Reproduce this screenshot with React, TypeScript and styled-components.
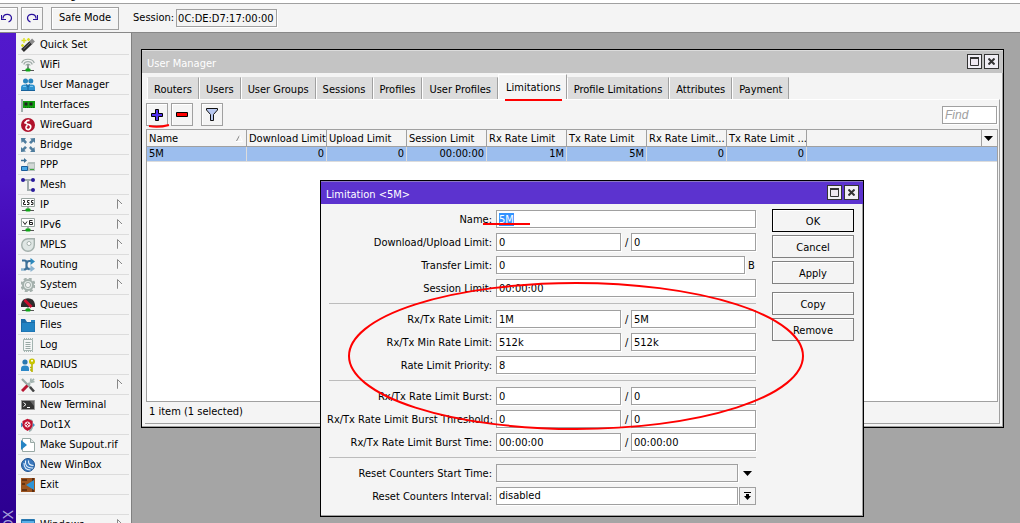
import React, { useEffect, useRef } from "react";
import styled, { createGlobalStyle, css } from "styled-components";

const line = "#a0a0a0";
const face = "#f4f4f4";
const font = '"DejaVu Sans Condensed", Tahoma, "DejaVu Sans", sans-serif';

const GlobalStyle = createGlobalStyle`
  * { box-sizing: border-box; }
  body { margin: 0; background: #a5a5a5; }
  body, button, input, select { font-family: ${font}; font-size: 11px; line-height: 14px; color: #000; }
  button, input, select { margin: 0; padding: 0; border-radius: 0; outline: none; }
  table { border-collapse: separate; border-spacing: 0; }
`;

const Page = styled.div`
  position: relative;
  display: flex;
  flex-direction: column;
  height: 100vh;
  overflow: hidden;
`;

const MenuBar = styled.nav`
  display: flex;
  align-items: flex-end;
  height: 4px;
  padding-left: 41px;
  overflow: hidden;
  background: #fff;
  border-bottom: 1px solid ${line};
`;

const MenuLink = styled.a`
  color: #000;
  text-decoration: none;
`;

const Toolbar = styled.div`
  display: flex;
  flex: none;
  align-items: center;
  height: 29px;
  background: ${face};
  border-bottom: 1px solid #888;
`;

const ToolButton = styled.button<{ $wide?: boolean }>`
  display: flex;
  align-items: center;
  justify-content: center;
  width: ${(p) => (p.$wide ? 68 : 22)}px;
  height: 23px;
  background: ${face};
  border: 1px solid ${line};
  box-shadow: inset 1px 1px #fff;
`;

const HistoryGroup = styled.div`
  display: flex;
  gap: 3px;
  margin: 0 8px 0 -4px;
`;

const SessionLabel = styled.label`
  display: flex;
  align-items: center;
  gap: 2px;
  margin-left: 14px;
`;

const textBox = css`
  height: 18px;
  min-width: 0;
  padding: 0 2px;
  background: #fff;
  border: 1px solid ${line};
  box-shadow: 1px 1px #fff;
`;

const SessionInput = styled.input`
  ${textBox}
  width: 101px;
  padding: 0 1px;
  background: ${face};
`;

const Main = styled.div`
  display: flex;
  flex: 1;
  min-height: 0;
`;

const Brand = styled.div`
  position: relative;
  flex: none;
  width: 16px;
  overflow: hidden;
  background: linear-gradient(#5218cc, #4c14c4 30%, #3c00ac 55%, #2c0090);
`;

const BrandText = styled.span`
  position: absolute;
  top: calc(100% - 13px);
  left: 0;
  line-height: 16px;
  font-family: "Liberation Sans", sans-serif;
  font-size: 14px;
  writing-mode: vertical-rl;
  rotate: 180deg;
  white-space: nowrap;
  color: #a8a4dc;
`;

const Sidebar = styled.nav`
  flex: none;
  width: 116px;
  padding: 2px 2px 0;
  overflow: hidden;
  background: ${face};
  border-right: 1px solid #808080;
`;

const SideItem = styled.button`
  display: flex;
  align-items: center;
  gap: 5px;
  width: 100%;
  height: 20px;
  padding: 0 6px 0 3px;
  background: none;
  border: 0;
  border-bottom: 1px solid #dcdcdc;
  text-align: left;
  white-space: nowrap;
  svg { flex: none; }
`;

const SideGap = styled.div`
  height: 20px;
  border-bottom: 1px solid #dcdcdc;
`;

const SideText = styled.span`
  flex: 1;
`;

const Desktop = styled.main`
  position: relative;
  flex: 1;
  overflow: hidden;
  background: #a5a5a5;
`;

const Window = styled.section`
  position: absolute;
  display: flex;
  flex-direction: column;
  background: ${face};
  border: 1px solid #000;
  box-shadow: inset -1px -1px ${line};
`;

const ManagerWindow = styled(Window)`
  left: 9px;
  right: 16px;
  top: 16px;
  height: 379px;
`;

const LimitWindow = styled(Window)`
  left: 188px;
  top: 147px;
  width: 544px;
`;

const TitleBar = styled.header<{ $active?: boolean }>`
  display: flex;
  align-items: center;
  gap: 2px;
  height: 23px;
  padding: 0 4px 1px 5px;
  color: #fff;
  background: ${(p) => (p.$active ? "#5c33cf" : "#c4c4c4")};
  border-top: 1px solid ${(p) => (p.$active ? "#8b78c4" : "#dcdcdc")};
`;

const Title = styled.h1`
  flex: 1;
  margin: 0;
  padding-top: 4px;
  font-size: 11px;
  font-weight: normal;
`;

const TitleButton = styled.button`
  display: flex;
  align-items: center;
  justify-content: center;
  width: 15px;
  height: 15px;
  background: #f0eef4;
  border: 1px solid #333;
`;

const ManagerBody = styled.div`
  display: flex;
  flex: 1;
  flex-direction: column;
  min-height: 0;
  padding: 1px 3px 3px;
`;

const Tabs = styled.div`
  display: flex;
  align-items: flex-end;
  height: 25px;
  padding-left: 2px;
`;

const Tab = styled.button<{ $active?: boolean }>`
  height: ${(p) => (p.$active ? 26 : 22)}px;
  margin-bottom: ${(p) => (p.$active ? -1 : 0)}px;
  padding: ${(p) => (p.$active ? "0 5px 0 7px" : "2px 6px 0")};
  background: ${(p) => (p.$active ? face : "#dcdcdc")};
  border: 0;
  border-left: 1px solid #fff;
  border-top: 1px solid ${(p) => (p.$active ? "#fff" : "#dcdcdc")};
  border-right: 1px solid ${line};
  white-space: nowrap;
`;

const Panel = styled.div`
  display: flex;
  flex: 1;
  flex-direction: column;
  min-height: 0;
  padding: 3px 1px 0 1px;
  border-top: 1px solid #fff;
  border-right: 1px solid ${line};
  border-bottom: 1px solid ${line};
`;

const Actions = styled.div`
  display: flex;
  align-items: center;
  gap: 3px;
  padding-right: 1px;
  margin-bottom: 3px;
`;

const FilterSlot = styled.div`
  flex: 1;
  padding-left: 5px;
`;

const FindInput = styled.input`
  ${textBox}
  width: 55px;
  font: italic 12px "Liberation Sans", sans-serif;
  &::placeholder { color: ${line}; }
`;

const ListBox = styled.div`
  flex: 1;
  min-height: 0;
  background: #fff;
  border: 1px solid ${line};
`;

const Grid = styled.table`
  width: 100%;
  table-layout: fixed;
`;

const Col = styled.col<{ $w?: number }>`
  width: ${(p) => (p.$w ? `${p.$w}px` : "auto")};
`;

const HeadCell = styled.th`
  height: 17px;
  padding: 1px 0 0 2px;
  overflow: hidden;
  background: ${face};
  border-right: 1px solid ${line};
  border-bottom: 1px solid ${line};
  font-weight: normal;
  text-align: left;
  white-space: nowrap;
  &:last-child { border-right: 0; }
`;

const HeadRow = styled.div`
  display: flex;
  align-items: center;
  justify-content: space-between;
  padding-right: 3px;
`;

const Cell = styled.td<{ $left?: boolean; $plain?: boolean }>`
  height: 15px;
  padding: 0 2px;
  background: #9cbeee;
  border-right: ${(p) => (p.$plain ? 0 : 1)}px solid #dcdcdc;
  border-bottom: 1px solid #dcdcdc;
  text-align: ${(p) => (p.$left ? "left" : "right")};
`;

const Status = styled.div`
  height: 21px;
  padding: 3px 3px;
`;

const LimitBody = styled.div`
  display: flex;
  gap: 16px;
  padding: 5px 9px 11px 6px;
`;

const Form = styled.form`
  display: grid;
  flex: 1;
  gap: 5px;
  padding-top: 1px;
`;

const Rule = styled.hr`
  justify-self: stretch;
  height: 1px;
  margin: 1px 0 1px 2px;
  background: #bcbcbc;
  border: 0;
`;

const Field = styled.div`
  display: grid;
  grid-template-columns: 165px 1fr;
  gap: 4px;
  height: 18px;
`;

const FieldLabel = styled.label`
  padding-top: 3px;
  text-align: right;
  white-space: nowrap;
`;

const Controls = styled.div`
  display: flex;
  min-width: 0;
`;

const FieldInput = styled.input`
  ${textBox}
  flex: 1;
  &::selection { color: #fff; background: #3393ff; }
  &:disabled { background: ${face}; }
`;

const FieldSelect = styled.select`
  ${textBox}
  flex: 1;
  appearance: none;
`;

const Slash = styled.span`
  width: 10px;
  padding: 3px 0 0 4px;
`;

const Unit = styled.span`
  width: 11px;
  padding: 3px 0 0 3px;
`;

const DropButton = styled.button<{ $bare?: boolean }>`
  display: flex;
  align-items: center;
  justify-content: center;
  width: 17px;
  height: 18px;
  margin-left: 1px;
  background: ${face};
  border: 1px solid ${(p) => (p.$bare ? "transparent" : line)};
`;

const ButtonColumn = styled.div`
  display: flex;
  flex-direction: column;
  gap: 3px;
  width: 82px;
`;

const PushButton = styled.button<{ $default?: boolean; $spaced?: boolean }>`
  height: 23px;
  margin-top: ${(p) => (p.$spaced ? 5 : 0)}px;
  padding-top: 2px;
  background: ${face};
  border: 1px solid ${(p) => (p.$default ? "#000" : "#808080")};
  box-shadow: inset 1px 1px #fff;
`;

const Marks = styled.svg`
  position: absolute;
  left: 0;
  top: 0;
  pointer-events: none;
`;

const green = "#10a818";
const Plug = () => (
  <>
    <path d="M1 12.500h12" stroke="#555" />
    <path d="M7 9v3" stroke="#666" />
    <rect x="4.500" y="10.500" width="5" height="3" rx="1" fill={green} />
  </>
);

const icons: Record<string, React.ReactNode> = {
  wand: (
    <>
      <path d="M1.500 12.500L10 4.500" stroke="#2c2c2c" strokeWidth="4" />
      <path d="M9.500 5L12.500 2" stroke="#8c8c8c" strokeWidth="4" />
      <path d="M2.500 11L9 5" stroke="#777" />
      <path d="M3 0v5M.5 2.500h5M7.500 0v3M6 1.500h3M0 7.500h3M1.500 6v3" stroke="#dce020" strokeWidth="1.300" />
    </>
  ),
  wifi: (
    <>
      <path d="M.7 5a6.500 5 0 0 1 12.600 0M2.700 6.500a4.500 4 0 0 1 8.600 0M4.700 7.500a2.500 2.500 0 0 1 4.600 0" fill="none" stroke="#a0aca8" strokeWidth="1.200" />
      <path d="M7 6v6" stroke="#90a098" strokeWidth="2" />
      <Plug />
    </>
  ),
  users: (
    <>
      <circle cx="4.500" cy="3" r="2.500" fill="#2784bd" />
      <circle cx="9.800" cy="3" r="2.500" fill="#2784bd" />
      <path d="M0 13V9.500Q0 6.500 3.500 6.500h7.500q3 0 3 3V13z" fill="#2f93d0" />
      <path d="M7 13V9q.5-2 2-2.500M7 9Q6.500 7 5 6.500M0 12.500h14" stroke="#17619a" fill="none" />
      <path d="M2 8.500h3M9 8.500h3" stroke="#7cc4ee" />
    </>
  ),
  card: (
    <>
      <path d="M1 1v13" stroke="#a0b0ac" strokeWidth="2" />
      <path d="M2 3h12v7H2z" fill="#12a012" />
      <path d="M3.500 4.500h3v3h-3zM8.500 4.500h3v3h-3z" fill="#222" />
      <path d="M4 9.500h9" stroke="#0c6c0c" strokeDasharray="1 1" />
    </>
  ),
  wireguard: (
    <>
      <circle cx="7" cy="7" r="7" fill="#b0122b" />
      <path d="M8.500 2.500q-3-.5-3.500 1.500t3 2.500q2.500 1 1.500 3.500-1.500 2.500-4 1-1.500-2.500 1-3.500M5 3.500l-1.500 2" fill="none" stroke="#fff" strokeWidth="1.600" />
    </>
  ),
  bridge: (
    <path d="M0 0h5L3.800 1.500 6 4 4.300 6 2 3.500.5 5zM14 0v5l-1.500-1.500L10 6 8 4.300 10.500 2 9 .5zM0 14V9l1.500 1.500L4 8l2 1.700L3.500 12 5 13.500zM14 14H9l1.500-1.500L8 10l1.700-2 2.300 2.500L13.500 9z" fill="#4f7d9e" />
  ),
  ppp: (
    <>
      <path d="M0 2.500h4" stroke="#3c6f94" strokeWidth="1.500" />
      <path d="M3 0l3 2.500L3 5z" fill="#3c6f94" />
      <path d="M6 6l1.500-2H14v9H7z" fill="#b4c0bc" />
      <path d="M7 7h6M8 9h5" stroke="#eee" />
      <path d="M.5 8.500h6v4h-6z" fill="#48a8e8" stroke="#1a5c98" />
      <path d="M9 11.500h4" stroke="#3aa83a" />
    </>
  ),
  mesh: (
    <>
      <path d="M2 2h10M7 2v10h5" fill="none" stroke="#a0acac" strokeWidth="2" />
      <g fill="#2a1c9c"><circle cx="2" cy="2" r="2" /><circle cx="12" cy="2" r="2" /><circle cx="12" cy="12" r="2" /></g>
    </>
  ),
  ip: (
    <>
      <path d="M.5.5h13v8H.5z" fill="#fff" stroke="#98a4a0" />
      <path d="M2 2.500h1.500v2h-1v2H5M8.500 2.500h-2v2h1.500v2H6M12.500 2.500h-2v2H12v2h-2" fill="none" stroke="#222" />
      <Plug />
    </>
  ),
  ipv6: (
    <>
      <path d="M.5.5h13v8H.5z" fill="#fff" stroke="#98a4a0" />
      <path d="M2 3.500l2 3 2-3M11.500 2.500h-3v4h3v-2h-3" fill="none" stroke="#222" />
      <Plug />
    </>
  ),
  mpls: (
    <>
      <path d="M7 .7h6.300V7A6.300 6.300 0 1 1 7 .7z" fill="#dfe6e4" stroke="#a4b0ac" strokeWidth="1.400" />
      <circle cx="8" cy="5.500" r="2" fill="#fff" stroke="#a4b0ac" />
    </>
  ),
  routing: (
    <>
      <path d="M0 11.500h3M7 11h4" fill="none" stroke="#8cb4d0" strokeWidth="2.400" />
      <path d="M9.500 7L14 10.800l-4.500 3.200z" fill="#8cb4d0" />
      <path d="M1 2.500h2.500q2 0 2 2.500v4.500q0 2-2.500 2M5.500 6q0-3 3-3H10M5.500 8q0 3 3 3" fill="none" stroke="#3c7098" strokeWidth="2.200" />
      <path d="M9.500 0L14 3.500 9.500 7z" fill="#2b88bc" />
    </>
  ),
  gear: (
    <>
      <circle cx="7" cy="7" r="5" fill="#e4eae8" stroke="#a4b0ac" strokeWidth="2" />
      <circle cx="7" cy="7" r="6.500" fill="none" stroke="#a4b0ac" strokeWidth="2" strokeDasharray="3 2.100" />
      <circle cx="7" cy="7" r="2.600" fill="#f4f4f4" stroke="#a4b0ac" />
    </>
  ),
  queues: (
    <>
      <path d="M0 9V6.500Q1 .3 7 .3T14 6.500V9z" fill="#2c2c2c" />
      <path d="M3.500 2l7 7" stroke="#d01030" strokeWidth="2.800" />
      <Plug />
    </>
  ),
  files: (
    <>
      <path d="M0 1h4l2 3h8v10H0z" fill="#1c6ca8" />
      <path d="M1 5h12.500v8.500H1z" fill="#2384c4" />
      <path d="M10 2h4v2h-4z" fill="#2384c4" />
    </>
  ),
  log: (
    <>
      <path d="M2.500 1.500h9v11h-9z" fill="#f4f6f6" stroke="#a4b4b0" />
      <path d="M4.500 4.500h5M4.500 6.500h5M4.500 8.500h5M4.500 10.500h5" stroke="#98a8a4" />
      <path d="M3 .5h9M3 13.500h9" stroke="#a4b4b0" strokeDasharray="1 1" />
    </>
  ),
  radius: (
    <>
      <circle cx="4" cy="4" r="2.600" fill="#2a78b0" />
      <path d="M0 13v-2.500Q0 7.500 4 7.500t4 3V13z" fill="#2c88c8" />
      <circle cx="11" cy="3.500" r="3" fill="#c8c400" />
      <circle cx="11" cy="2.800" r="1" fill="#fff" />
      <path d="M11 6v8M11 9.500H9M11 12H9" stroke="#b8b400" strokeWidth="1.600" />
    </>
  ),
  tools: (
    <>
      <path d="M1 1l9 9" stroke="#98a8a4" strokeWidth="2.200" />
      <path d="M9 9l4 4.500" stroke="#444" strokeWidth="2.500" />
      <path d="M9.500 4.500L13 .8M9.500 4.500L13.500 3.500M9.500 4.500L10 .5" stroke="#a4b4b0" strokeWidth="1.700" />
      <path d="M9 5L6 8" stroke="#a4b4b0" strokeWidth="2.500" />
      <path d="M6.500 7.500L1 13" stroke="#b81430" strokeWidth="3" />
    </>
  ),
  terminal: (
    <>
      <path d="M.5 2.500h13v9H.5z" fill="#333" stroke="#999" />
      <path d="M2.500 4.500L5 6.500l-2.500 2M6 9.500h3" fill="none" stroke="#fff" />
      <path d="M9 3h4v5z" fill="#666" />
    </>
  ),
  dot1x: (
    <>
      <path d="M0 4.500L3 7l-3 2.500zM10.500 3.500L14 7l-3.500 3.500z" fill="#3c94cc" />
      <path d="M8 1q4 0 4 3v6q-1 3-4 4z" fill="#9cb0b0" />
      <path d="M1.500 3L6.500.8 11.500 3v5q-1 3-5 5-4-2-5-5z" fill="#c01030" />
      <circle cx="6.500" cy="6.500" r="2.500" fill="none" stroke="#fff" />
      <path d="M5 5l3 3M8 5L5 8" stroke="#fff" strokeWidth=".8" />
    </>
  ),
  supout: (
    <>
      <path d="M1.500.5h8l4 4v9h-12z" fill="#fff" stroke="#98a8a4" />
      <path d="M9.500.5v4h4" fill="#dfe6e4" stroke="#98a8a4" />
      <path d="M0 2l6 5-6 5z" fill="#2684c4" />
    </>
  ),
  winbox: (
    <>
      <circle cx="7" cy="7" r="6.500" fill="#3a78bc" stroke="#1f5490" />
      <path d="M4.500 2.500q-1 8 7.500 7.500M7.500 2.500q-.5 5 5 5M3 5q0 7 6.500 7" fill="none" stroke="#e4f0fc" strokeWidth="1.100" />
    </>
  ),
  exit: (
    <>
      <path d="M0 0h14v14H0z" fill="#9c5420" />
      <path d="M1 2h5M1 12h5M1 6h3" stroke="#54290c" strokeWidth="1.600" />
      <path d="M12 0v14" stroke="#5c2e10" strokeWidth="2" />
      <path d="M13 2v10L5 7z" fill="#2c94d8" />
    </>
  ),
  windows: (
    <>
      <path d="M.5 1.500h13v11H.5z" fill="#58b0e8" stroke="#2878b0" />
      <path d="M1 2.500h12" stroke="#1f6ca8" />
    </>
  ),
};

const Glyph = ({ name }: { name: string }) => (
  <svg width="14" height="14" viewBox="0 0 14 14" aria-hidden="true">{icons[name]}</svg>
);

type Entry = { icon: string; label: string; more?: boolean };
const entries: Entry[] = [
  { icon: "wand", label: "Quick Set" },
  { icon: "wifi", label: "WiFi" },
  { icon: "users", label: "User Manager" },
  { icon: "card", label: "Interfaces" },
  { icon: "wireguard", label: "WireGuard" },
  { icon: "bridge", label: "Bridge" },
  { icon: "ppp", label: "PPP" },
  { icon: "mesh", label: "Mesh" },
  { icon: "ip", label: "IP", more: true },
  { icon: "ipv6", label: "IPv6", more: true },
  { icon: "mpls", label: "MPLS", more: true },
  { icon: "routing", label: "Routing", more: true },
  { icon: "gear", label: "System", more: true },
  { icon: "queues", label: "Queues" },
  { icon: "files", label: "Files" },
  { icon: "log", label: "Log" },
  { icon: "radius", label: "RADIUS" },
  { icon: "tools", label: "Tools", more: true },
  { icon: "terminal", label: "New Terminal" },
  { icon: "dot1x", label: "Dot1X" },
  { icon: "supout", label: "Make Supout.rif" },
  { icon: "winbox", label: "New WinBox" },
  { icon: "exit", label: "Exit" },
];

const SideEntry = ({ icon, label, more }: Entry) => (
  <SideItem type="button">
    <Glyph name={icon} />
    <SideText>{label}</SideText>
    {more && (
      <svg width="6" height="12" viewBox="0 0 6 12" aria-hidden="true">
        <path d="M.5 10V.5L5 5" fill="none" stroke="#888" />
        <path d="M5 5L1 9.500" stroke="#fff" />
      </svg>
    )}
  </SideItem>
);

const tabs = ["Routers", "Users", "User Groups", "Sessions", "Profiles", "User Profiles", "Limitations", "Profile Limitations", "Attributes", "Payment"];

const columns = [
  { title: "Name", width: 100, value: "5M" },
  { title: "Download Limit", width: 80, value: "0" },
  { title: "Upload Limit", width: 80, value: "0" },
  { title: "Session Limit", width: 80, value: "00:00:00" },
  { title: "Rx Rate Limit", width: 80, value: "1M" },
  { title: "Tx Rate Limit", width: 80, value: "5M" },
  { title: "Rx Rate Limit...", width: 80, value: "0" },
  { title: "Tx Rate Limit ...", width: 80, value: "0" },
];

const WindowButtons = () => (
  <>
    <TitleButton type="button" aria-label="Maximize">
      <svg width="9" height="9" viewBox="0 0 9 9"><path d="M.5.5h8v8h-8z" fill="#eee8f0" stroke="#333" /><path d="M0 1h9" stroke="#333" strokeWidth="2" /></svg>
    </TitleButton>
    <TitleButton type="button" aria-label="Close">
      <svg width="7" height="7" viewBox="0 0 7 7"><path d="M.5.5l6 6M6.500.5l-6 6" stroke="#333" strokeWidth="2" /></svg>
    </TitleButton>
  </>
);

const DownTriangle = () => (
  <svg width="9" height="5" viewBox="0 0 9 5" aria-hidden="true"><path d="M0 0h9L4.500 5z" /></svg>
);

type RowProps = { id: string; label: string; value: string; second?: string; unit?: string; inputRef?: React.Ref<HTMLInputElement> };
const TextField = ({ id, label, value, second, unit, inputRef }: RowProps) => (
  <Field>
    <FieldLabel htmlFor={id}>{label}:</FieldLabel>
    <Controls>
      <FieldInput id={id} ref={inputRef} defaultValue={value} />
      {second !== undefined && (
        <>
          <Slash>/</Slash>
          <FieldInput aria-label={`${label}, second value`} defaultValue={second} />
        </>
      )}
      {unit && <Unit>{unit}</Unit>}
    </Controls>
  </Field>
);

const Manager = () => (
  <ManagerWindow aria-label="User Manager">
    <TitleBar>
      <Title>User Manager</Title>
      <WindowButtons />
    </TitleBar>
    <ManagerBody>
      <Tabs role="tablist">
        {tabs.map((t) => (
          <Tab key={t} type="button" role="tab" aria-selected={t === "Limitations"} $active={t === "Limitations"}>{t}</Tab>
        ))}
      </Tabs>
      <Panel>
        <Actions>
          <ToolButton type="button" aria-label="Add">
            <svg width="12" height="12" viewBox="0 0 12 12"><path d="M4.500.5h3v4h4v3h-4v4h-3v-4h-4v-3h4z" fill="#5030f0" stroke="#000" /></svg>
          </ToolButton>
          <ToolButton type="button" aria-label="Remove entry">
            <svg width="12" height="5" viewBox="0 0 12 5"><path d="M.5.5h11v4H.5z" fill="#f00" stroke="#000" /></svg>
          </ToolButton>
          <FilterSlot>
            <ToolButton type="button" aria-label="Filter">
              <svg width="12" height="13" viewBox="0 0 12 13"><path d="M.5.5h11v1.500L7.500 6.500v6h-3v-6L.5 2z" fill="#b8c8f0" stroke="#111" /></svg>
            </ToolButton>
          </FilterSlot>
          <FindInput aria-label="Find" placeholder="Find" />
        </Actions>
        <ListBox>
          <Grid>
            <colgroup>
              {columns.map((c) => <Col key={c.title} $w={c.width} />)}
              <Col />
              <Col $w={15} />
            </colgroup>
            <thead>
              <tr>
                {columns.map((c, i) => (
                  <HeadCell key={c.title}>
                    {i === 0 ? (
                      <HeadRow>
                        {c.title}
                        <svg width="7" height="7" viewBox="0 0 7 7" aria-hidden="true"><path d="M.5 6L3.500.5" stroke="#888" /><path d="M3.500.5L6.500 6.500H0" fill="none" stroke="#fff" /></svg>
                      </HeadRow>
                    ) : c.title}
                  </HeadCell>
                ))}
                <HeadCell />
                <HeadCell aria-label="Columns"><HeadRow><DownTriangle /></HeadRow></HeadCell>
              </tr>
            </thead>
            <tbody>
              <tr>
                {columns.map((c, i) => <Cell key={c.title} $left={i === 0}>{c.value}</Cell>)}
                <Cell $plain />
                <Cell $plain />
              </tr>
            </tbody>
          </Grid>
        </ListBox>
        <Status>1 item (1 selected)</Status>
      </Panel>
    </ManagerBody>
  </ManagerWindow>
);

const Limitation = () => {
  const nameRef = useRef<HTMLInputElement>(null);
  useEffect(() => {
    nameRef.current?.focus();
    nameRef.current?.select();
  }, []);
  return (
    <LimitWindow role="dialog" aria-label="Limitation">
      <TitleBar $active>
        <Title>Limitation &lt;5M&gt;</Title>
        <WindowButtons />
      </TitleBar>
      <LimitBody>
        <Form>
          <TextField id="name" label="Name" value="5M" inputRef={nameRef} />
          <TextField id="transfer-pair" label="Download/Upload Limit" value="0" second="0" />
          <TextField id="transfer" label="Transfer Limit" value="0" unit="B" />
          <TextField id="session" label="Session Limit" value="00:00:00" />
          <Rule />
          <TextField id="rate" label="Rx/Tx Rate Limit" value="1M" second="5M" />
          <TextField id="min-rate" label="Rx/Tx Min Rate Limit" value="512k" second="512k" />
          <TextField id="priority" label="Rate Limit Priority" value="8" />
          <Rule />
          <TextField id="burst" label="Rx/Tx Rate Limit Burst" value="0" second="0" />
          <TextField id="threshold" label="Rx/Tx Rate Limit Burst Threshold" value="0" second="0" />
          <TextField id="burst-time" label="Rx/Tx Rate Limit Burst Time" value="00:00:00" second="00:00:00" />
          <Rule />
          <Field>
            <FieldLabel htmlFor="start">Reset Counters Start Time:</FieldLabel>
            <Controls>
              <FieldInput id="start" disabled />
              <DropButton type="button" $bare aria-label="Set start time"><DownTriangle /></DropButton>
            </Controls>
          </Field>
          <Field>
            <FieldLabel htmlFor="interval">Reset Counters Interval:</FieldLabel>
            <Controls>
              <FieldSelect id="interval"><option>disabled</option></FieldSelect>
              <DropButton type="button" aria-label="Choose interval">
                <svg width="7" height="8" viewBox="0 0 7 8"><path d="M0 0h7v1H0zM2 2h3v2h2L3.500 8 0 4h2z" /></svg>
              </DropButton>
            </Controls>
          </Field>
        </Form>
        <ButtonColumn>
          <PushButton type="button" $default>OK</PushButton>
          <PushButton type="button">Cancel</PushButton>
          <PushButton type="button">Apply</PushButton>
          <PushButton type="button" $spaced>Copy</PushButton>
          <PushButton type="button">Remove</PushButton>
        </ButtonColumn>
      </LimitBody>
    </LimitWindow>
  );
};

export default function App() {
  return (
    <Page>
      <GlobalStyle />
      <MenuBar>
        <MenuLink href="#settings">Settings</MenuLink>
      </MenuBar>
      <Toolbar>
        <HistoryGroup>
          <ToolButton type="button" aria-label="Undo">
            <svg width="12" height="10" viewBox="0 0 12 10"><path d="M2 5.500C2 0 10.500 0 10.500 5q0 3-3 4M.5 2v4.500H5" fill="none" stroke="#28109c" strokeWidth="1.200" /></svg>
          </ToolButton>
          <ToolButton type="button" aria-label="Redo">
            <svg width="12" height="10" viewBox="0 0 12 10"><path d="M10 5.500C10 0 1.500 0 1.500 5q0 3 3 4M11.500 2v4.500H7" fill="none" stroke="#28109c" strokeWidth="1.200" /></svg>
          </ToolButton>
        </HistoryGroup>
        <ToolButton type="button" $wide>Safe Mode</ToolButton>
        <SessionLabel>
          Session:
          <SessionInput readOnly value="0C:DE:D7:17:00:00" />
        </SessionLabel>
      </Toolbar>
      <Main>
        <Brand><BrandText>RouterOS WINBOX</BrandText></Brand>
        <Sidebar>
          {entries.map((e) => <SideEntry key={e.label} {...e} />)}
          <SideGap />
          <SideEntry icon="windows" label="Windows" more />
        </Sidebar>
        <Desktop>
          <Manager />
          <Limitation />
          <Marks width="888" height="490" viewBox="132 33 888 490" fill="none" stroke="#f00" strokeWidth="2" aria-hidden="true">
            <ellipse cx="576" cy="356" rx="227" ry="73" />
            <path d="M483 224h47M505 100h57M149 126q9 2 20-1" />
          </Marks>
        </Desktop>
      </Main>
    </Page>
  );
}
